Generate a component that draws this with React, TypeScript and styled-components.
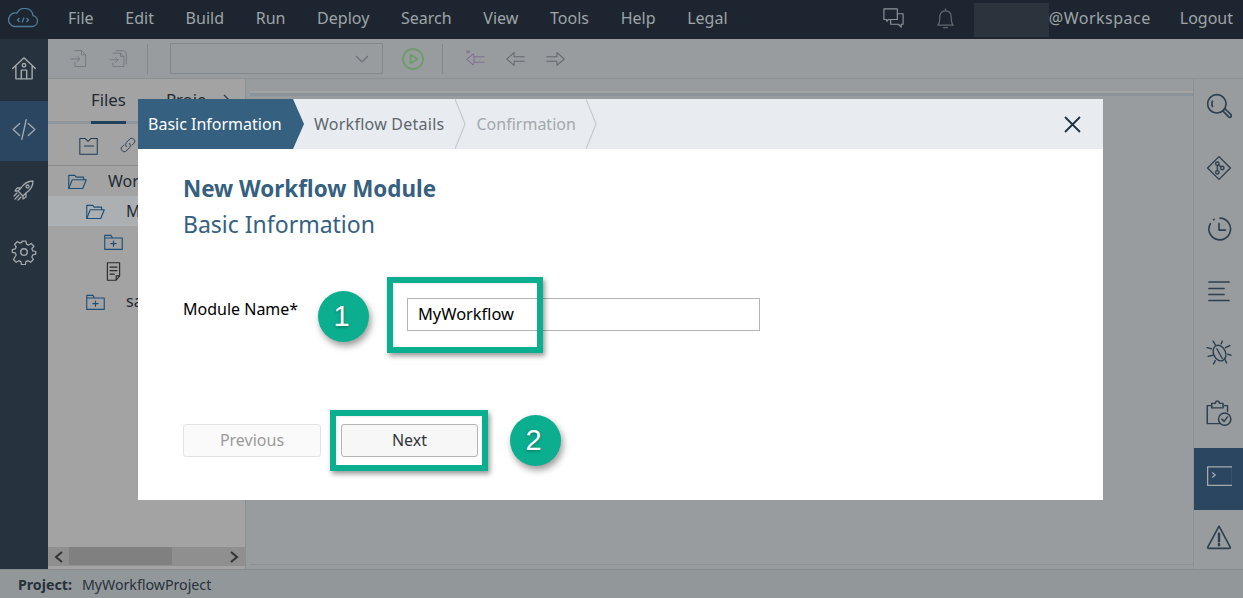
import React from "react";
import styled, { createGlobalStyle } from "styled-components";

const Global = createGlobalStyle`
  html, body { margin: 0; padding: 0; width: 1243px; height: 598px; overflow: hidden; }
  body { font-family: "Noto Sans", "Open Sans", sans-serif; }
  * { box-sizing: border-box; }
  svg { flex: none; }
`;

const Page = styled.div`
  position: relative;
  width: 1243px;
  height: 598px;
  display: flex;
  flex-direction: column;
  overflow: hidden;
  background: #999c9e;
`;

const TopBar = styled.header`
  height: 39px;
  flex: none;
  background: #1d2630;
  display: flex;
  align-items: center;
  color: #9fa4a7;
  font-size: 16px;
  padding-bottom: 3px;
`;
const Logo = styled.div`
  width: 68px;
  padding-left: 7px;
  display: flex;
`;
const Menu = styled.nav`
  display: flex;
  gap: 31.7px;
`;
const MenuItem = styled.span``;
const TopRight = styled.div`
  margin-left: auto;
  display: flex;
  align-items: center;
  padding-right: 10px;
`;
const TopIcon = styled.span`
  display: flex;
  width: 52px;
  justify-content: center;
`;
const Masked = styled.div`
  width: 75px;
  height: 34px;
  margin: 3px 0 0 2px;
  background: #2b343d;
`;
const Handle = styled.span`
  letter-spacing: 0.5px;
`;
const Logout = styled.span`
  margin-left: 29px;
`;

const Body = styled.div`
  flex: 1;
  min-height: 0;
  display: flex;
`;
const LeftRail = styled.aside`
  width: 48px;
  flex: none;
  background: #26323d;
  display: flex;
  flex-direction: column;
`;
const RailItem = styled.div<{ $active?: boolean }>`
  height: ${(p) => (p.$active ? 60 : 62)}px;
  padding-bottom: 4px;
  flex: none;
  display: flex;
  align-items: center;
  justify-content: center;
  background: ${(p) => (p.$active ? "#2a4660" : "transparent")};
`;
const Center = styled.div`
  flex: 1;
  min-width: 0;
  display: flex;
  flex-direction: column;
`;
const ToolBar = styled.div`
  height: 40px;
  flex: none;
  display: flex;
  align-items: center;
  padding-left: 11px;
  border-bottom: 1px solid #8b9093;
`;
const ToolIcon = styled.span<{ $ml?: number }>`
  width: 39px;
  height: 24px;
  flex: none;
  margin-left: ${(p) => p.$ml ?? 0}px;
  display: flex;
  align-items: center;
  justify-content: center;
`;
const ToolSep = styled.span<{ $left: number; $right: number }>`
  width: 1px;
  height: 30px;
  background: #82878a;
  margin: 0 ${(p) => p.$right}px 0 ${(p) => p.$left}px;
`;
const Select = styled.div`
  width: 213px;
  height: 31px;
  border: 1px solid #83888b;
  display: flex;
  align-items: center;
  justify-content: flex-end;
  padding-right: 13px;
`;
const Workspace = styled.div`
  flex: 1;
  min-height: 0;
  display: flex;
`;
const FilePanel = styled.section`
  width: 198px;
  flex: none;
  background: #a3a3a3;
  border-right: 1px solid #8b9093;
  display: flex;
  flex-direction: column;
`;
const Tabs = styled.div`
  height: 45px;
  flex: none;
  display: flex;
  border-bottom: 3px solid #8f979c;
  padding-left: 43px;
  font-size: 16.8px;
  color: #1f2a35;
  position: relative;
`;
const Tab = styled.span<{ $active?: boolean }>`
  height: 45px;
  line-height: 42px;
  margin-right: 40px;
  ${(p) => (p.$active ? "border-bottom: 3px solid #22405a;" : "width: 44px; overflow: hidden;")}
`;
const TabMore = styled.svg`
  position: absolute;
  left: 175px;
  top: 15px;
`;
const PanelTools = styled.div`
  height: 42px;
  flex: none;
  display: flex;
  align-items: center;
  gap: 18px;
  padding-left: 30px;
  border-bottom: 1px solid #8b8b8b;
`;
const Tree = styled.div`
  flex: 1;
  min-height: 0;
  width: 90px;
  overflow: hidden;
`;
const TreeRow = styled.div<{ $depth: number; $selected?: boolean }>`
  height: 30px;
  display: flex;
  align-items: center;
  gap: 20px;
  padding-left: ${(p) => 19 + p.$depth * 18}px;
  background: ${(p) => (p.$selected ? "#acb0b2" : "transparent")};
  font-size: 16px;
  color: #1f2a35;
`;
const TreeLabel = styled.span`
  white-space: nowrap;
  overflow: hidden;
  min-width: 0;
`;
const HScroll = styled.div`
  height: 19px;
  margin-bottom: 3px;
  flex: none;
  background: #8f8f8f;
  display: flex;
  align-items: center;
  justify-content: space-between;
  padding: 0 6px;
  position: relative;
`;
const HThumb = styled.span`
  position: absolute;
  left: 21px;
  width: 103px;
  top: 0;
  bottom: 1px;
  background: #808080;
`;
const Editor = styled.section`
  flex: 1;
  min-width: 0;
  display: flex;
  flex-direction: column;
  padding: 12px 0 4px 4px;
  justify-content: space-between;
`;
const EditorStrip = styled.div`
  height: 5px;
  border-top: 2px solid #a3a3a3;
  background: #8a929a;
`;
const EditorFoot = styled.div`
  height: 1px;
  background: #8b9093;
`;
const RightRail = styled.aside`
  width: 50px;
  flex: none;
  border-left: 1px solid #8b9093;
  display: flex;
  flex-direction: column;
`;
const RightItem = styled.div<{ $active?: boolean }>`
  height: 61.5px;
  flex: none;
  padding-bottom: 7px;
  display: flex;
  align-items: center;
  justify-content: center;
  background: ${(p) => (p.$active ? "#2a4660" : "transparent")};
`;
const StatusBar = styled.footer`
  height: 29px;
  flex: none;
  background: #92979a;
  border-top: 1px solid #868b8e;
  display: flex;
  align-items: center;
  padding-left: 18px;
  font-size: 14.2px;
  color: #27313b;
`;
const StatusKey = styled.b`
  font-weight: 700;
  margin-right: 10px;
`;

const Modal = styled.div`
  position: absolute;
  left: 138px;
  top: 99px;
  width: 965px;
  height: 401px;
  background: #fff;
  display: flex;
  flex-direction: column;
`;
const Steps = styled.div`
  height: 50px;
  flex: none;
  background: #e8ecf0;
  display: flex;
  align-items: center;
  padding-right: 21px;
  font-size: 16px;
`;
const ActiveStep = styled.div`
  width: 166px;
  height: 50px;
  background: #35607f;
  color: #fff;
  display: flex;
  align-items: center;
  padding-left: 10px;
  white-space: nowrap;
  clip-path: polygon(0 0, 155px 0, 100% 50%, 155px 100%, 0 100%);
`;
const Step = styled.div<{ $muted?: boolean }>`
  color: ${(p) => (p.$muted ? "#a2a8ae" : "#5d666e")};
  letter-spacing: ${(p) => (p.$muted ? 0 : 0.25)}px;
  margin-left: 10px;
  white-space: nowrap;
`;
const StepChevron = styled.svg`
  width: 12px;
  height: 50px;
  flex: none;
  margin: 0 0 0 10px;
`;
const CloseBtn = styled.span`
  margin-left: auto;
  display: flex;
`;
const ModalBody = styled.div`
  flex: 1;
  padding: 25px 45px 43px;
  display: flex;
  flex-direction: column;
`;
const Title = styled.h1`
  margin: 0;
  font-size: 22.4px;
  line-height: 30px;
  font-weight: 700;
  color: #35607f;
`;
const SubTitle = styled.h2`
  margin: 5px 0 0;
  font-size: 23px;
  line-height: 30px;
  font-weight: 400;
  color: #35607f;
`;
const FormRow = styled.div`
  margin-top: 59px;
  display: grid;
  grid-template-columns: 224px 353px;
`;
const Label = styled.label`
  font-size: 16px;
  line-height: 22px;
  color: #000;
`;
const TextInput = styled.input`
  height: 33px;
  width: 353px;
  border: 1px solid #b5b5b5;
  padding: 0 10px 2px;
  font: inherit;
  font-size: 16.4px;
  color: #000;
  background: #fff;
  outline: none;
`;
const Actions = styled.div`
  margin-top: auto;
  display: flex;
  gap: 20px;
`;
const Btn = styled.button<{ $disabled?: boolean }>`
  width: ${(p) => (p.$disabled ? 138 : 137)}px;
  height: 33px;
  border-radius: 3px;
  border: 1px solid ${(p) => (p.$disabled ? "#e2e2e2" : "#b4b4b4")};
  background: ${(p) => (p.$disabled ? "#fafafa" : "#f7f7f7")};
  color: ${(p) => (p.$disabled ? "#9a9a9a" : "#32363a")};
  font: inherit;
  font-size: 16px;
  padding: 0 0 2px;
`;

const Callout = styled.div<{ $l: number; $t: number; $w: number; $h: number }>`
  position: absolute;
  left: ${(p) => p.$l}px;
  top: ${(p) => p.$t}px;
  width: ${(p) => p.$w}px;
  height: ${(p) => p.$h}px;
  border: 6px solid #0bae8e;
  box-shadow: 2px 3px 5px rgba(0, 0, 0, 0.4), inset 1px 1px 2px rgba(0, 0, 0, 0.08);
`;
const Badge = styled.div<{ $l: number; $t: number }>`
  position: absolute;
  left: ${(p) => p.$l}px;
  top: ${(p) => p.$t}px;
  width: 51px;
  height: 51px;
  padding-right: 4px;
  border-radius: 50%;
  background: #0bae8e;
  color: #fff;
  font-family: "Liberation Sans", sans-serif;
  font-size: 29px;
  display: flex;
  align-items: center;
  justify-content: center;
  box-shadow: 2px 4px 7px rgba(0, 0, 0, 0.4);
  text-shadow: 0 1px 3px rgba(0, 0, 0, 0.35);
`;

type IconProps = { c: string; s?: number; w?: number; children: React.ReactNode };
const Ic = ({ c, s = 24, w = 1.3, children }: IconProps) => (
  <svg width={s} height={s} viewBox="0 0 24 24" fill="none" stroke={c} strokeWidth={w} strokeLinecap="round" strokeLinejoin="round">
    {children}
  </svg>
);

const RAIL = "#a4a9ac";
const DARK = "#2c3f50";
const TOOL = "#71797f";

const railIcons = [
  <Ic c={RAIL} s={26}><path d="M1.5 12.5 12 2.5l10.5 10M4.5 10.5V22h15V10.5" /><circle cx="12" cy="9.500" r="1.600" /><path d="M9.500 22v-8h5v8" /></Ic>,
  <Ic c={RAIL} s={26}><path d="M8 7 2 12.500 8 18M16 7l6 5.500-6 5.500M14 3.500l-4 18" /></Ic>,
  <Ic c={RAIL} s={24}><path d="M21 3c-5 0-9 2.500-12 7l-3 3 5 5 3-3c4.500-3 7-7 7-12zM9 10H5l-2 3h3M14 15v4l-3 2v-3M7 17l-4 4M5 15l-3 3M9 19l-3 3" /><circle cx="15.500" cy="8.500" r="1.500" /></Ic>,
  <Ic c={RAIL} s={26}><path d="M10 2h4l.6 3 2.200 1 2.600-1.600 2.800 2.800L20 9.800l1 2.200 3 .6v2.800l-3 .6-1 2.200 1.600 2.600-2.800 2.800-2.600-1.600-2.200 1-.6 3h-4l-.6-3-2.200-1-2.600 1.600-2.800-2.800L4 16.200 3 14l-3-.6v-2.800l3-.6 1-2.200-1.600-2.600 2.800-2.800L7.800 4l2.200-1z" transform="translate(1.200 .2) scale(.9)" /><circle cx="12" cy="12" r="3" /></Ic>,
];

const FolderOpen = ({ c = "#1d4f78" }: { c?: string }) => (
  <Ic c={c} s={21}><path d="M2 20V5h7l1.500 2H19v3" /><path d="M2 20h16l4-10H6z" /></Ic>
);
const FolderPlus = ({ c = "#1d4f78" }: { c?: string }) => (
  <Ic c={c} s={21}><path d="M2 5h7M2 8h20v13H2zM2 8V5M9 5l2 3" /><path d="M12 11.500v6M9 14.500h6" /></Ic>
);
const DocIcon = () => (
  <Ic c="#2a2a2a" s={21}><path d="M5 2h14v15l-4 5H5zM19 17h-4v5" /><path d="M8 7h8M8 11h8M8 15h5" /></Ic>
);

const rightIcons = [
  <Ic c={DARK} s={26} w={1.500}><circle cx="10" cy="10" r="8.500" /><path d="M15.500 16.500l2-2 5.500 5.500a1.400 1.400 0 0 1-2 2zM6 7.500c-.7 1.500-.7 3.500 0 5" /></Ic>,
  <Ic c={DARK} s={26} w={1.300}><path d="M12 1.500 22.500 12 12 22.500 1.500 12z" /><circle cx="10.500" cy="8" r="1.600" /><circle cx="15" cy="12" r="1.600" /><circle cx="10.500" cy="16" r="1.600" /><path d="M10.500 9.600v4.800M11.700 9.200l2 1.700" /></Ic>,
  <Ic c={DARK} s={26} w={1.500}><path d="M13 2a10 10 0 1 1-9 5M7 3.500 7.500 3" /><path d="M12 7v6h6" /></Ic>,
  <Ic c={DARK} s={24} w={1.700}><path d="M2 3h20M2 9.500h15M2 15.500h15M2 21.500h20" /></Ic>,
  <Ic c={DARK} s={26} w={1.300}><ellipse cx="12.500" cy="13" rx="5.500" ry="7.500" transform="rotate(-25 12.500 13)" /><path d="M9 6 6.500 2M14 4.500 15 2M5 9 1 8M18 8l4-2M6.500 15 2 16M20 14l3 1M8.500 20 7 23M17 18l2 4M10 9l5 9" /></Ic>,
  <Ic c={DARK} s={27} w={1.300}><path d="M13 21H2V5h4M16 5h4v5M6 3h3l1-2h2l1 2h3v4H6z" /><circle cx="17.500" cy="17" r="5.500" /><path d="m15 17 2 2 3-4" /></Ic>,
];

const Chev = () => (
  <StepChevron viewBox="0 0 12 50"><path d="M0 0 L10 25 L0 50" fill="none" stroke="#c5cacf" strokeWidth="1.200" /></StepChevron>
);

export default function App() {
  return (
    <Page>
      <Global />
      <TopBar>
        <Logo>
          <svg width="32" height="20" viewBox="0 0 32 20" fill="none" stroke="#4f7c9c" strokeWidth="1.300">
            <path d="M7 18.500h18a5.500 5.500 0 0 0 1-10.900A8.500 8.500 0 0 0 10 5a6.800 6.800 0 0 0-3 13.500z" />
            <path d="M12.500 10l-2 2 2 2M19.500 10l2 2-2 2M17 9.500l-2 5" />
          </svg>
        </Logo>
        <Menu>
          {["File", "Edit", "Build", "Run", "Deploy", "Search", "View", "Tools", "Help", "Legal"].map((m) => (
            <MenuItem key={m}>{m}</MenuItem>
          ))}
        </Menu>
        <TopRight>
          <TopIcon>
            <Ic c="#8d9499" s={23} w={1.200}><path d="M2 2h14v11H7l-2 2v-2H2z" /><path d="M16 7h6v11h-2v3l-3-3H9v-5" /></Ic>
          </TopIcon>
          <TopIcon>
            <Ic c="#61676c" s={23} w={1.300}><path d="M4 19c2-2 2-4 2-8 0-4 2-7 6-7s6 3 6 7c0 4 0 6 2 8zM10 21.500h4M12 2v2" /></Ic>
          </TopIcon>
          <Masked />
          <Handle>@Workspace</Handle>
          <Logout>Logout</Logout>
        </TopRight>
      </TopBar>

      <Body>
        <LeftRail>
          {railIcons.map((ic, i) => (
            <RailItem key={i} $active={i === 1}>{ic}</RailItem>
          ))}
        </LeftRail>
        <Center>
          <ToolBar>
            <ToolIcon><Ic c={TOOL} s={20} w={1.100}><path d="M7 2h8l5 5v14H7v-5M15 2v5h5M2 12h11M10 9l3 3-3 3" /></Ic></ToolIcon>
            <ToolIcon><Ic c={TOOL} s={20} w={1.100}><path d="M6 5h9l4 4v12H6v-4M15 5v4h4M10 2h9l3 3v13M2 13h10M9 10l3 3-3 3" /></Ic></ToolIcon>
            <ToolSep $left={10} $right={22} />
            <Select>
              <svg width="14" height="8" viewBox="0 0 14 8" fill="none" stroke="#6a7076" strokeWidth="1.200"><path d="M1 1l6 6 6-6" /></svg>
            </Select>
            <ToolIcon $ml={10}>
              <Ic c="#6f9c6a" s={24} w={1.800}><circle cx="12" cy="12" r="10" /><path d="M9.500 7.500v9l7-4.500z" /></Ic>
            </ToolIcon>
            <ToolSep $left={10} $right={12} />
            <ToolIcon><Ic c="#7f6f90" s={22} w={1.100}><path d="M22 9.500H11l-1-3-7 6 7 6 1-3h11M11 9.500v6M3 3l3 2M3 5l3-2" /></Ic></ToolIcon>
            <ToolIcon $ml={1}><Ic c="#5f6870" s={22} w={1.100}><path d="M22 9.500H11V5l-8 7 8 7v-4.500h11" /></Ic></ToolIcon>
            <ToolIcon $ml={2}><Ic c="#5f6870" s={22} w={1.100}><path d="M2 9.500h11V5l8 7-8 7v-4.500H2" /></Ic></ToolIcon>
          </ToolBar>
          <Workspace>
            <FilePanel>
              <Tabs>
                <Tab $active>Files</Tab>
                <Tab>Project</Tab>
                <TabMore width="8" height="12" viewBox="0 0 8 12" fill="none" stroke="#2b3a48" strokeWidth="1.300"><path d="m1 1 5 5-5 5" /></TabMore>
              </Tabs>
              <PanelTools>
                <Ic c="#1f3a52" s={22} w={1.100}><path d="M2 5h6l3 3 3-3h7v17H2zM7 13h10" /></Ic>
                <Ic c="#1f3a52" s={20} w={1.100}><path d="M10 14a4 4 0 0 1 0-5l5-5a4 4 0 0 1 5 5l-3 3M14 10a4 4 0 0 1 0 5l-5 5a4 4 0 0 1-5-5l3-3" /></Ic>
              </PanelTools>
              <Tree>
                <TreeRow $depth={0}><FolderOpen /><TreeLabel>Workspace</TreeLabel></TreeRow>
                <TreeRow $depth={1} $selected><FolderOpen /><TreeLabel>MyWorkflowProject</TreeLabel></TreeRow>
                <TreeRow $depth={2}><FolderPlus /></TreeRow>
                <TreeRow $depth={2}><DocIcon /></TreeRow>
                <TreeRow $depth={1}><FolderPlus /><TreeLabel>sample</TreeLabel></TreeRow>
              </Tree>
              <HScroll>
                <HThumb />
                <svg width="10" height="12" viewBox="0 0 10 12" fill="none" stroke="#333" strokeWidth="2"><path d="M8 1 2 6l6 5" /></svg>
                <svg width="10" height="12" viewBox="0 0 10 12" fill="none" stroke="#333" strokeWidth="2"><path d="m2 1 6 5-6 5" /></svg>
              </HScroll>
            </FilePanel>
            <Editor>
              <EditorStrip />
              <EditorFoot />
            </Editor>
            <RightRail>
              {rightIcons.map((ic, i) => (
                <RightItem key={i}>{ic}</RightItem>
              ))}
              <RightItem $active>
                <Ic c="#a6aaac" s={26} w={1.200}><path d="M1.500 4.500h23v17h-23zM6 10l2.500 2L6 14" /></Ic>
              </RightItem>
              <RightItem>
                <Ic c={DARK} s={26} w={1.500}><path d="M12 2 1.500 21.500a1 1 0 0 0 1 1h19a1 1 0 0 0 1-1z" /><path d="M12 9v7" strokeWidth="2.200" /><path d="M12 18.500v1" strokeWidth="2.200" /></Ic>
              </RightItem>
            </RightRail>
          </Workspace>
        </Center>
      </Body>
      <StatusBar>
        <StatusKey>Project:</StatusKey>
        <span>MyWorkflowProject</span>
      </StatusBar>

      <Modal>
        <Steps>
          <ActiveStep>Basic Information</ActiveStep>
          <Step>Workflow Details</Step>
          <Chev />
          <Step $muted>Confirmation</Step>
          <Chev />
          <CloseBtn>
            <svg width="19" height="19" viewBox="0 0 19 19" stroke="#1f2f40" strokeWidth="1.800"><path d="M2 2l15 15M17 2 2 17" /></svg>
          </CloseBtn>
        </Steps>
        <ModalBody>
          <Title>New Workflow Module</Title>
          <SubTitle>Basic Information</SubTitle>
          <FormRow>
            <Label>Module Name*</Label>
            <TextInput defaultValue="MyWorkflow" />
          </FormRow>
          <Actions>
            <Btn $disabled>Previous</Btn>
            <Btn>Next</Btn>
          </Actions>
        </ModalBody>
      </Modal>

      <Callout $l={387} $t={277} $w={156} $h={76} />
      <Callout $l={330} $t={410} $w={158} $h={61} />
      <Badge $l={318} $t={291}>1</Badge>
      <Badge $l={510} $t={415}>2</Badge>
    </Page>
  );
}
